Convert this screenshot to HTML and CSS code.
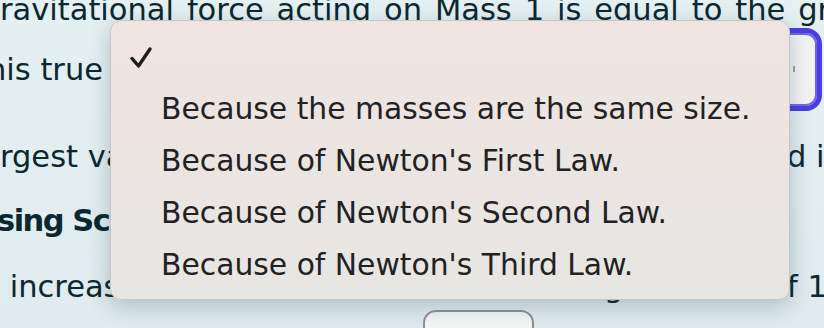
FILE: index.html
```html
<!DOCTYPE html>
<html lang="en">
<head>
  <meta charset="UTF-8" />
  <title>Quiz - Gravitational Force</title>
  <link rel="stylesheet" href="styles.css">
</head>
<body>
  <div class="page">
    <p class="line first">ravitational force acting on Mass 1 is equal to the gravitational force</p>

    <div class="answer-row">
      <span class="lead">his true</span>
      <div class="select-box"><span class="arrow"></span></div>
    </div>

    <div class="line split">
      <span class="left">rgest value of the force is measured when the masses are close</span>
      <span class="right">d increase</span>
    </div>

    <h3 class="line heading">sing Scale Factors</h3>

    <div class="line split three">
      <span class="left">&nbsp;increase the distance between the masses</span>
      <span class="mid">gravitational force will drop</span>
      <span class="right">f 1/4</span>
    </div>

    <div class="btn-row">
      <button class="check-btn"></button>
    </div>
  </div>

  <div class="menu">
    <div class="item checked">
      <svg class="tick" width="24" height="24" viewBox="0 0 24 24">
        <polyline points="3,12.5 9.5,20 21,3" fill="none" stroke="#1e1e1e" stroke-width="3.4" stroke-linecap="round" stroke-linejoin="round"/>
      </svg>
    </div>
    <div class="item">Because the masses are the same size.</div>
    <div class="item">Because of Newton's First Law.</div>
    <div class="item">Because of Newton's Second Law.</div>
    <div class="item">Because of Newton's Third Law.</div>
  </div>
</body>
</html>
```

FILE: styles.css
```css
* {
  box-sizing: border-box;
  margin: 0;
  padding: 0;
}
html, body {
  height: 100%;
  overflow: hidden;
}
body {
  font-family: 'DejaVu Sans', Verdana, sans-serif;
  color: #0b2830;
  background: linear-gradient(180deg, #e5f0f2 0%, #dfebee 100%);
  position: relative;
}
.page {
  margin-top: -12px;
  font-size: 30.5px;
}
.line {
  height: 40px;
  line-height: 40px;
  white-space: nowrap;
  overflow: hidden;
}
.first {
  margin-top: 2px;
  word-spacing: 3.2px;
}
.answer-row {
  display: flex;
  height: 81px;
}
.lead {
  margin-left: -13px;
  margin-top: 20px;
  line-height: 40px;
  height: 40px;
  white-space: nowrap;
}
.select-box {
  width: 618px;
  height: 83px;
  margin-top: -2px;
  margin-left: auto;
  margin-right: 2px;
  border: 5px solid #4a3ee2;
  box-shadow: inset 0 0 0 2px #6d64ec;
  border-radius: 16px;
  background: #f3f3f4;
  position: relative;
}
.arrow {
  position: absolute;
  right: 22px;
  top: 33px;
  width: 2px;
  height: 6px;
  background: #a0a0a0;
}
.split {
  display: grid;
  grid-template-columns: 787px auto;
  margin-top: 26px;
}
.split .left,
.split .mid {
  overflow: hidden;
}
.split:first-of-type .left {
  margin-left: -2px;
}
.three {
  grid-template-columns: 604px 183px auto;
}
.heading {
  font-size: 30.5px;
  font-weight: bold;
  letter-spacing: -1.5px;
  margin-top: 24px;
  margin-left: -3px;
}
.heading + .split {
  margin-top: 26px;
}
.btn-row {
  margin-top: 3px;
  padding-left: 423px;
}
.check-btn {
  width: 111px;
  height: 44px;
  border: 2px solid #8b9099;
  border-radius: 13px;
  background: #f3f4f4;
}
.menu {
  position: absolute;
  left: 110px;
  top: 20px;
  width: 680px;
  height: 280px;
  padding: 10px 0;
  border-radius: 11px;
  border: 1px solid #c4c6c6;
  background: linear-gradient(180deg, #efe4e2 0%, #ebe5e2 50%, #e7e6e3 100%);
  box-shadow: 0 6px 22px rgba(40, 70, 80, 0.28);
  font-size: 29.8px;
  color: #222222;
}
.item {
  height: 52px;
  line-height: 52px;
  padding-left: 50px;
  white-space: nowrap;
}
.checked {
  padding-left: 18px;
  display: flex;
  align-items: center;
}
.tick {
  margin-top: 2px;
}
```
